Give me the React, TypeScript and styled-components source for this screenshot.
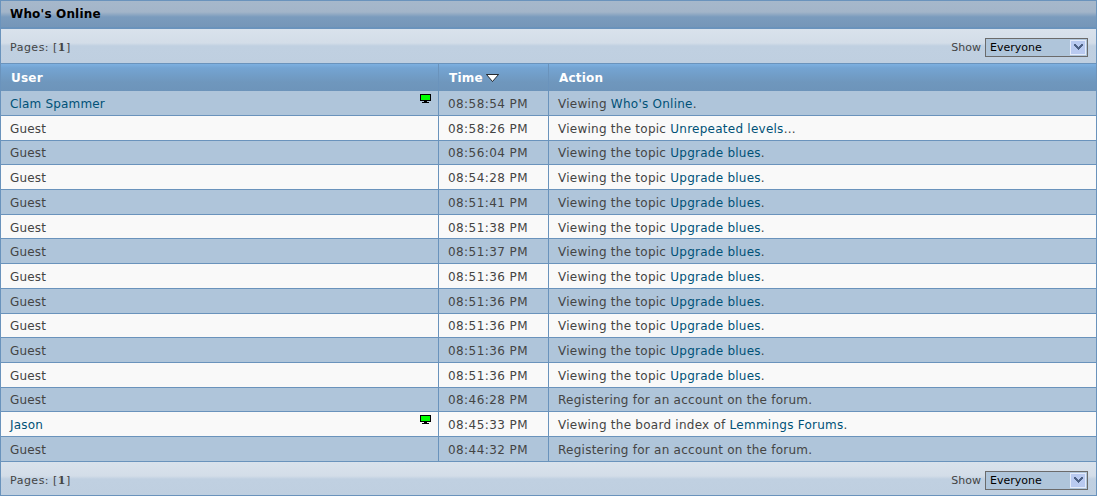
import React from "react";
import styled, { createGlobalStyle } from "styled-components";

const Global = createGlobalStyle`
  html, body { margin: 0; padding: 0; background: #fff; }
  body { font-family: "DejaVu Sans", Verdana, sans-serif; font-size: 12px; color: #444; }
`;

const Page = styled.div`
  width: 1097px;
  height: 496px;
  overflow: hidden;
  box-sizing: border-box;
  display: flex;
  flex-direction: column;
`;

const TitleBar = styled.h3`
  margin: 0;
  height: 29px;
  flex: none;
  box-sizing: border-box;
  border: 1px solid #6a93bc;
  border-width: 1px 1px 2px 1px;
  padding: 0 9px;
  display: flex;
  align-items: center;
  font-size: 12px;
  letter-spacing: 0.17px;
  font-weight: bold;
  color: #000;
  background: linear-gradient(#a6b8cb 0, #a3b5c9 11px, #7a9bbd 16px, #7596b8 100%);
`;

const Pager = styled.div<{ $bottom?: boolean }>`
  height: 34px;
  flex: none;
  box-sizing: border-box;
  border: 1px solid #6a93bc;
  border-width: 0 1px ${(p) => (p.$bottom ? "1px" : "0")} 1px;
  padding: ${(p) => (p.$bottom ? "4px" : "2px")} 8px 0 9px;
  display: flex;
  align-items: center;
  justify-content: space-between;
  font-size: 11px;
  color: #444;
  background: linear-gradient(#d9e2ec 0, #d3dde8 14px, #c0d0e1 17px, #bfcfe0 100%);
`;

const PagesLabel = styled.span`
  letter-spacing: 0.5px;
`;

const PageNumber = styled.strong`
  font-family: "DejaVu Serif", serif;
  font-weight: bold;
`;

const ShowGroup = styled.div`
  display: flex;
  align-items: center;
  gap: 4px;
`;

const SelectBox = styled.div`
  width: 103px;
  height: 19px;
  box-sizing: border-box;
  border: 1px solid #6b6b6b;
  background: #afc5da;
  display: flex;
  align-items: center;
  justify-content: space-between;
  padding-left: 4px;
  font-size: 11px;
  color: #000;
`;

const SelectArrow = styled.span`
  width: 16px;
  height: 15px;
  margin-right: 1px;
  box-sizing: border-box;
  border: 1px solid #e4ebfb;
  background: #b9caf0;
  display: flex;
  align-items: center;
  justify-content: center;
`;

const Row = styled.div<{ $alt?: boolean }>`
  display: grid;
  grid-template-columns: 437px 110px 1fr;
  height: 24.71px;
  flex: none;
  box-sizing: border-box;
  border-left: 1px solid #6a93bc;
  border-right: 1px solid #6a93bc;
  border-bottom: 1px solid #6a93bc;
  background: ${(p) => (p.$alt ? "#afc5da" : "#f9f9f9")};
`;

const HeaderRow = styled.div`
  display: grid;
  grid-template-columns: 437px 110px 1fr;
  height: 28.2px;
  flex: none;
  box-sizing: border-box;
  border-top: 1px solid #6a93bc;
  border-left: 1px solid #6a93bc;
  border-right: 1px solid #6a93bc;
  background: linear-gradient(#7db0e0 0, #74a4d2 4px, #6f97bd 18px, #6d94ba 100%);
`;

const HeadCell = styled.div`
  display: flex;
  align-items: center;
  gap: 3px;
  padding-left: 10px;
  font-size: 12px;
  letter-spacing: 0.2px;
  font-weight: bold;
  color: #fff;
  & + & { border-left: 1px solid #6a93bc; }
`;

const Cell = styled.div<{ $spacing?: string }>`
  position: relative;
  display: flex;
  align-items: center;
  padding: 2px 0 0 9px;
  font-size: 12px;
  letter-spacing: ${(p) => p.$spacing ?? "0.25px"};
  color: #444;
  white-space: pre;
  & + & { border-left: 1px solid #6a93bc; }
`;

const Link = styled.a`
  color: #005177;
  text-decoration: none;
`;

const OnlineIcon = styled.svg`
  position: absolute;
  right: 7px;
  top: 3px;
  width: 11px;
  height: 10px;
`;

const Monitor = () => (
  <OnlineIcon viewBox="0 0 11 10" shapeRendering="crispEdges">
    <rect x="0" y="0" width="11" height="7" fill="#000" />
    <rect x="1" y="1" width="9" height="5" fill="#00ff00" />
    <rect x="4" y="7" width="3" height="1" fill="#000" />
    <rect x="2" y="8" width="7" height="1" fill="#000" />
  </OnlineIcon>
);

const SortArrow = () => (
  <svg width="13" height="8" viewBox="0 0 13 8" style={{ marginTop: 1 }}>
    <path d="M0.5 0.5H12.5L6.5 7.5Z" fill="#fff" stroke="#000" strokeWidth="0.8" />
  </svg>
);

const Chevron = () => (
  <svg width="9" height="6" viewBox="0 0 9 6" shapeRendering="crispEdges">
    <path d="M0 0h2v1h1v1h1v1h1V2h1V1h1V0h2v2H8v1H7v1H6v1H5v1H4V5H3V4H2V3H1V2H0Z" fill="#4d6185" />
  </svg>
);

const PagerBar = ({ bottom }: { bottom?: boolean }) => (
  <Pager $bottom={bottom}>
    <PagesLabel>
      Pages: [<PageNumber>1</PageNumber>]
    </PagesLabel>
    <ShowGroup>
      Show
      <SelectBox>
        Everyone
        <SelectArrow>
          <Chevron />
        </SelectArrow>
      </SelectBox>
    </ShowGroup>
  </Pager>
);

type Entry = { user: string; member?: boolean; time: string; pre: string; link?: string; post?: string };

const upgrade = (time: string): Entry => ({
  user: "Guest",
  time,
  pre: "Viewing the topic ",
  link: "Upgrade blues",
  post: ".",
});
const register = (time: string): Entry => ({
  user: "Guest",
  time,
  pre: "Registering for an account on the forum.",
});

const entries: Entry[] = [
  { user: "Clam Spammer", member: true, time: "08:58:54 PM", pre: "Viewing ", link: "Who's Online", post: "." },
  { user: "Guest", time: "08:58:26 PM", pre: "Viewing the topic ", link: "Unrepeated levels", post: "..." },
  upgrade("08:56:04 PM"),
  upgrade("08:54:28 PM"),
  upgrade("08:51:41 PM"),
  upgrade("08:51:38 PM"),
  upgrade("08:51:37 PM"),
  upgrade("08:51:36 PM"),
  upgrade("08:51:36 PM"),
  upgrade("08:51:36 PM"),
  upgrade("08:51:36 PM"),
  upgrade("08:51:36 PM"),
  register("08:46:28 PM"),
  { user: "Jason", member: true, time: "08:45:33 PM", pre: "Viewing the board index of ", link: "Lemmings Forums", post: "." },
  register("08:44:32 PM"),
];

export default function App() {
  return (
    <Page>
      <Global />
      <TitleBar>Who's Online</TitleBar>
      <PagerBar />
      <HeaderRow>
        <HeadCell>User</HeadCell>
        <HeadCell>
          Time <SortArrow />
        </HeadCell>
        <HeadCell>Action</HeadCell>
      </HeaderRow>
      {entries.map((e, i) => (
        <Row key={i} $alt={i % 2 === 0}>
          <Cell $spacing="0.17px">
            {e.member ? <Link href="#">{e.user}</Link> : e.user}
            {e.member && <Monitor />}
          </Cell>
          <Cell $spacing="0.42px">{e.time}</Cell>
          <Cell>
            {e.pre}
            {e.link && <Link href="#">{e.link}</Link>}
            {e.post}
          </Cell>
        </Row>
      ))}
      <PagerBar bottom />
    </Page>
  );
}
